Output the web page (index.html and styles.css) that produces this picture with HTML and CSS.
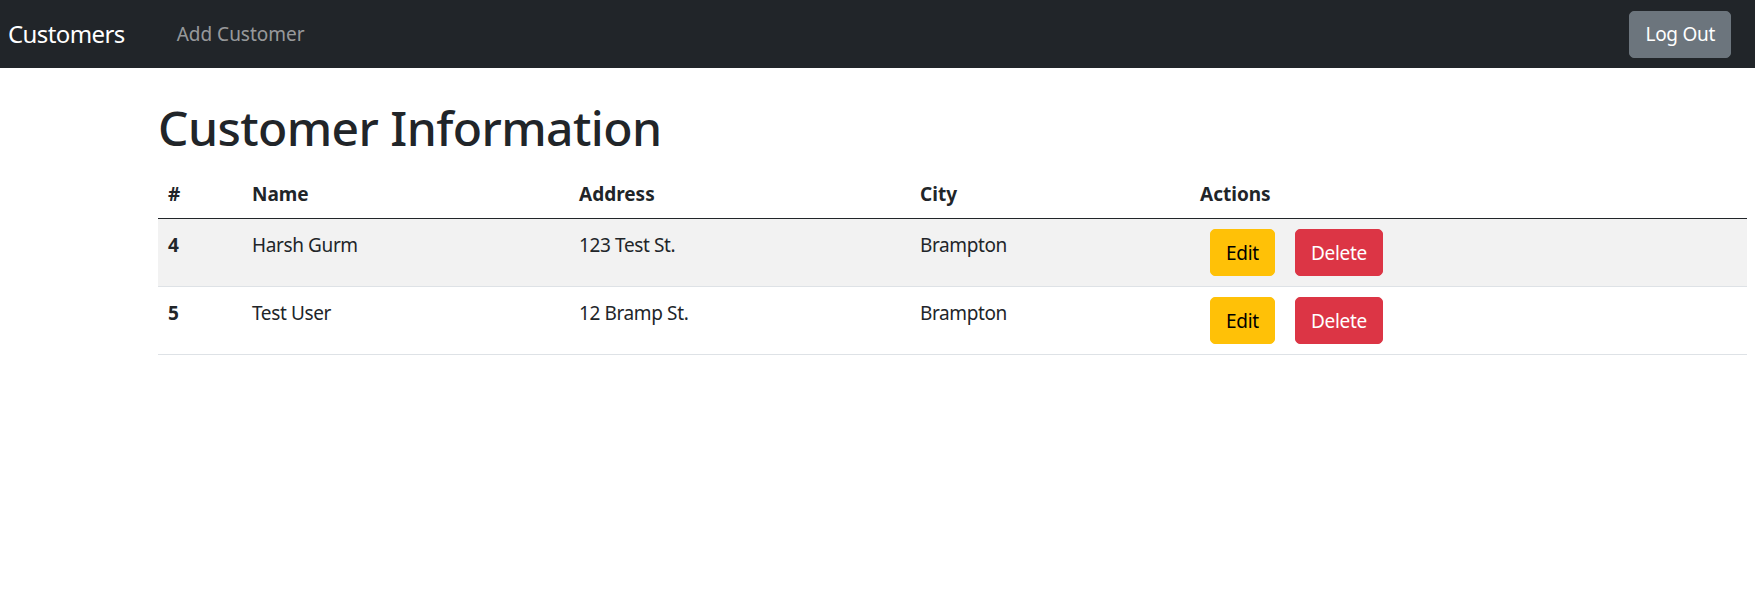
FILE: index.html
```html
<!DOCTYPE html>
<html lang="en">
<head>
<meta charset="utf-8">
<title>Customers</title>
<link rel="stylesheet" href="styles.css">
</head>
<body>
<nav class="navbar">
  <div class="nav-left">
    <a class="brand" href="#">Customers</a>
    <a class="nav-link" href="#">Add Customer</a>
  </div>
  <button class="btn btn-secondary">Log Out</button>
</nav>
<main class="content">
  <h1 class="title">Customer Information</h1>
  <table class="table">
    <thead>
      <tr>
        <th class="c-id">#</th>
        <th class="c-name">Name</th>
        <th class="c-addr">Address</th>
        <th class="c-city">City</th>
        <th class="c-act">Actions</th>
      </tr>
    </thead>
    <tbody>
      <tr class="striped">
        <th>4</th>
        <td>Harsh Gurm</td>
        <td>123 Test St.</td>
        <td>Brampton</td>
        <td class="actions"><button class="btn btn-warning">Edit</button><button class="btn btn-danger">Delete</button></td>
      </tr>
      <tr>
        <th>5</th>
        <td>Test User</td>
        <td>12 Bramp St.</td>
        <td>Brampton</td>
        <td class="actions"><button class="btn btn-warning">Edit</button><button class="btn btn-danger">Delete</button></td>
      </tr>
    </tbody>
  </table>
</main>
</body>
</html>
```
FILE: styles.css
```css
* { box-sizing: border-box; }
html, body { margin: 0; padding: 0; }
body {
  font-family: "Noto Sans", "Open Sans", sans-serif;
  font-size: 19px;
  line-height: 30px;
  color: #212529;
  background: #fff;
  letter-spacing: -0.02em;
}
.navbar {
  height: 68px;
  background: #212529;
  display: flex;
  align-items: center;
  justify-content: space-between;
  padding: 0 24px 0 8px;
}
.nav-left { display: flex; align-items: center; }
.brand {
  color: #fff;
  text-decoration: none;
  font-size: 24px;
  line-height: 36px;
  letter-spacing: -0.025em;
  margin-right: 52px;
}
.nav-link {
  color: rgba(255,255,255,.55);
  text-decoration: none;
  font-size: 19px;
  letter-spacing: 0;
}
.btn {
  font-family: inherit;
  font-size: 19px;
  line-height: 30px;
  letter-spacing: -0.015em;
  padding: 7.5px 15px;
  border: 1px solid transparent;
  border-radius: 5px;
  cursor: pointer;
}
.btn-secondary { background: #6c757d; color: #fff; border-color: #6c757d; height: 47px; }
.btn-warning { background: #ffc107; color: #000; border-color: #ffc107; margin: 0 10px; }
.btn-danger { background: #dc3545; color: #fff; border-color: #dc3545; margin: 0 10px; }
.content { padding: 30px 8px 0 158px; }
.title {
  font-size: 48px;
  line-height: 60px;
  font-weight: 500;
  letter-spacing: -0.012em;
  margin: 0 0 10px 0;
}
.table {
  width: 100%;
  border-collapse: collapse;
}
.table th, .table td {
  padding: 11px 10px 9px 10px;
  text-align: left;
  vertical-align: top;
  font-weight: 400;
}
.table th { font-weight: 700; letter-spacing: 0; }
.table td.actions { padding: 10px; }
.table thead th { border-bottom: 1px solid #212529; }
.table tbody tr { border-bottom: 1px solid #dee2e6; }
.table tbody tr.striped { background: #f2f2f2; }
.c-id { width: 84px; }
.c-name { width: 327px; }
.c-addr { width: 341px; }
.c-city { width: 280px; }
```
